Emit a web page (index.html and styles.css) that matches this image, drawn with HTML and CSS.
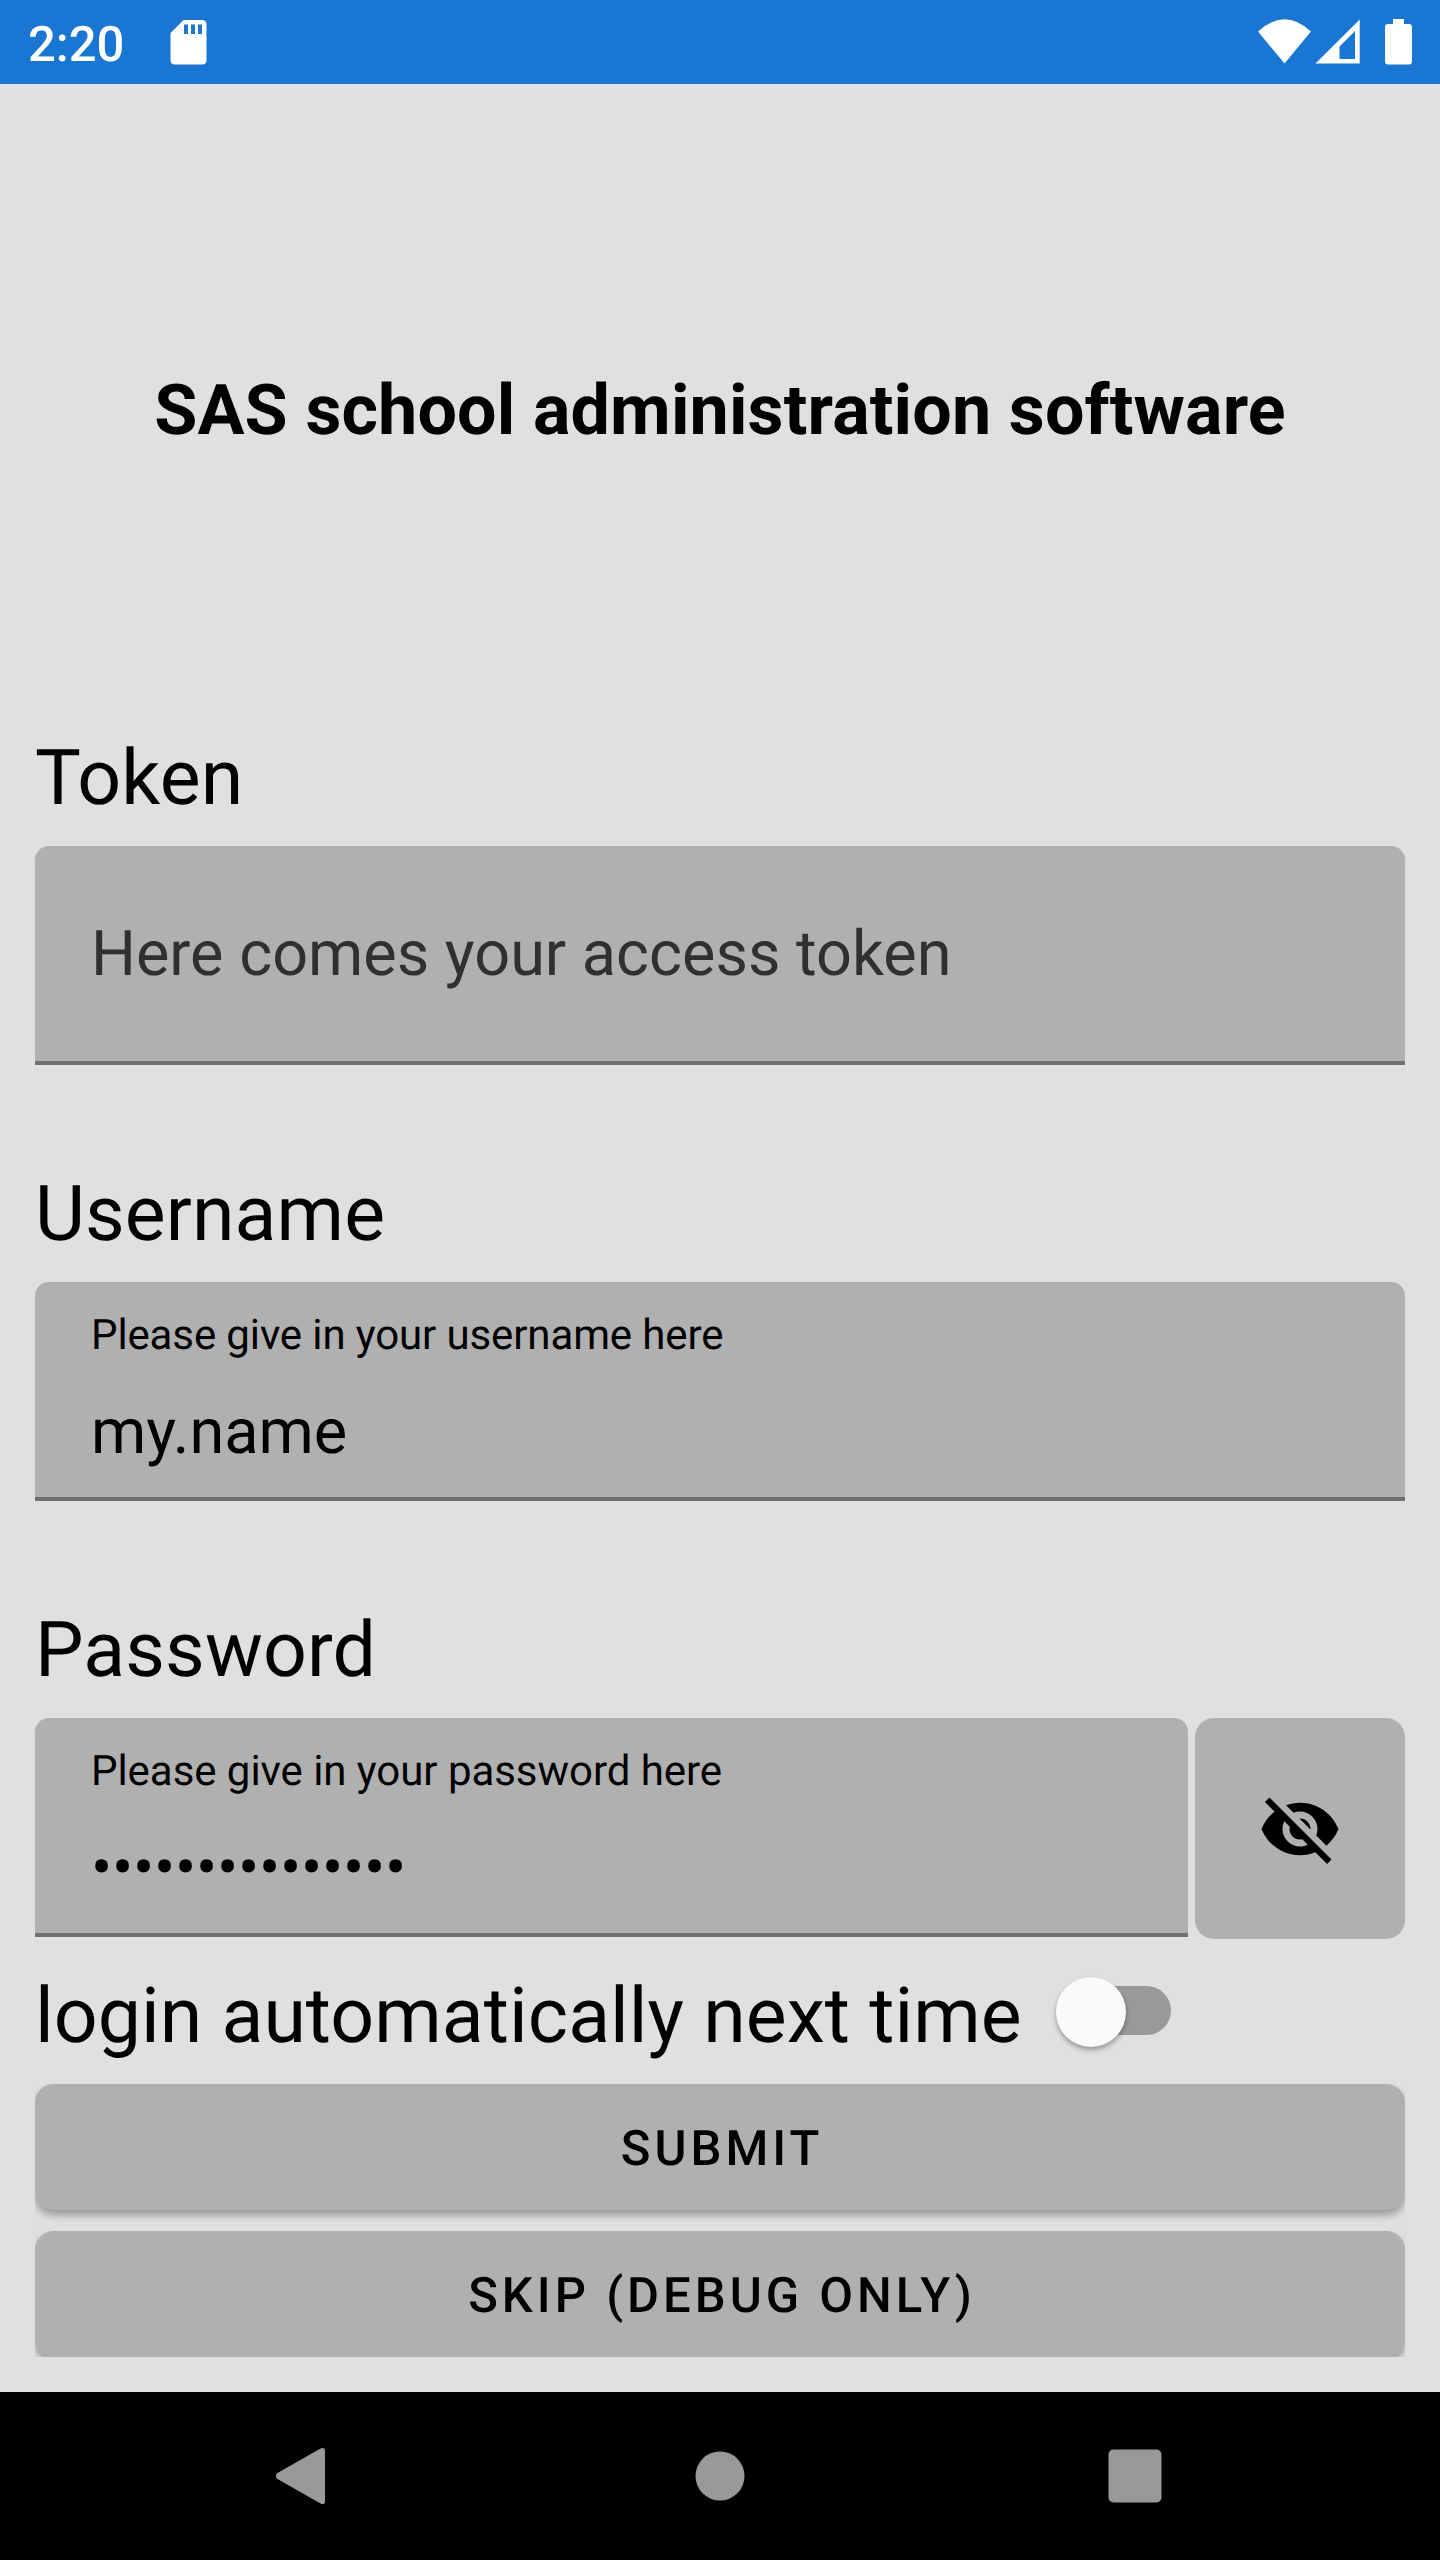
FILE: index.html
```html
<!DOCTYPE html>
<html lang="en">
<head>
<meta charset="utf-8">
<title>SAS school administration software</title>
<link rel="stylesheet" href="styles.css">
</head>
<body>
<header class="status">
  <span class="clock">2:20</span>
  <svg class="sd" width="38" height="48" viewBox="0 0 38 48"><path fill="#fff" fill-rule="evenodd" d="M13.500 0H32q4.500 0 4.500 4.500V40q0 4.500-4.500 4.500H5Q.5 44.500.5 40V13zM14 4.500V14h4V4.500zm7 0V14h4V4.500zm7 0V14h4V4.500z"/></svg>
  <svg class="signals" width="154" height="48" viewBox="1258 20 154 48"><path fill="#fff" d="M1258 31.500Q1284.500 7 1311 31.500L1284.500 63.500z"/><path fill="#fff" fill-rule="evenodd" d="M1359.700 19.500V63.500H1315.500zM1355 31 1339.500 46.500V59H1355z"/><path fill="#fff" d="M1393 19h11v5h5q3 0 3 3v34q0 3.500-3 3.500h-21q-3 0-3-3.500V27q0-3 3-3h5z"/></svg>
</header>
<main>
  <h1>SAS school administration software</h1>
  <section class="group">
    <label class="label">Token</label>
    <div class="field empty"><span class="value">Here comes your access token</span></div>
  </section>
  <section class="group">
    <label class="label">Username</label>
    <div class="field"><span class="hint">Please give in your username here</span><span class="value">my.name</span></div>
  </section>
  <section class="group last">
    <label class="label">Password</label>
    <div class="row">
      <div class="field"><span class="hint wide">Please give in your password here</span><span class="value dots">•••••••••••••••</span></div>
      <button class="eye"><svg width="84" height="84" viewBox="0 0 24 24"><path d="M12 7c2.76 0 5 2.24 5 5 0 .65-.13 1.26-.36 1.83l2.92 2.92c1.51-1.26 2.7-2.89 3.43-4.75-1.73-4.39-6-7.5-11-7.5-1.4 0-2.74.25-3.98.7l2.16 2.16C10.74 7.13 11.35 7 12 7zM2 4.27l2.28 2.28.46.46C3.08 8.3 1.78 10.02 1 12c1.73 4.39 6 7.5 11 7.5 1.55 0 3.03-.3 4.38-.84l.42.42L19.73 22 21 20.73 3.27 3 2 4.27zM7.53 9.8l1.55 1.55c-.05.21-.08.43-.08.65 0 1.66 1.34 3 3 3 .22 0 .44-.03.65-.08l1.55 1.55c-.67.33-1.41.53-2.2.53-2.76 0-5-2.24-5-5 0-.79.2-1.53.53-2.2zm4.31-.78l3.15 3.15.02-.16c0-1.66-1.34-3-3-3l-.17.01z"/></svg></button>
    </div>
  </section>
  <div class="auto"><span class="auto-label">login automatically next time</span><span class="switch"></span></div>
  <button class="btn">SUBMIT</button>
  <button class="btn flat">SKIP (DEBUG ONLY)</button>
</main>
<nav class="nav">
  <svg width="1440" height="168" viewBox="0 2392 1440 168"><path fill="#999" d="M277.500 2473 320.500 2448.500Q325 2446.500 325 2451V2501Q325 2505.500 320.500 2503.500L277.500 2479Q274 2476 277.500 2473z"/><circle cx="720" cy="2476" r="24.500" fill="#999"/><rect x="1108.500" y="2449.500" width="53" height="53" rx="5" fill="#999"/></svg>
</nav>
</body>
</html>
```
FILE: styles.css
```css
* { box-sizing: border-box; }
body { margin: 0; width: 1440px; height: 2560px; display: flex; flex-direction: column; background: #e0e0e0; color: #000; font-family: Roboto, sans-serif; text-rendering: geometricPrecision; }
button { border: 0; padding: 0; font: inherit; color: inherit; text-rendering: inherit; }
.status { height: 84px; flex: none; background: #1976d2; display: flex; align-items: flex-start; padding: 20px 28px 0; color: #fff; }
.clock { font-size: 49px; line-height: 49px; width: 142px; font-weight: 500; }
.signals { margin-left: auto; overflow: visible; }
main { flex: 1; padding: 0 35px; display: flex; flex-direction: column; }
h1 { margin: 0; height: 648px; flex: none; line-height: 654px; text-align: center; font-size: 70px; font-weight: 700; letter-spacing: 0.14px; white-space: nowrap; }
.group { height: 436px; flex: none; }
.group.last { height: 336px; }
.label { display: block; height: 114px; line-height: 93px; font-size: 77px; letter-spacing: 0.1px; }
.field { height: 219px; padding: 33px 56px 0; display: flex; flex-direction: column; background: #b0b0b0; border-bottom: 4px solid #707070; border-radius: 14px 14px 0 0; }
.hint { font-size: 42px; line-height: 42px; letter-spacing: -0.12px; }
.hint.wide { letter-spacing: -0.05px; }
.value { font-size: 63px; line-height: 74px; margin-top: 39px; }
.empty .value { color: #303030; }
.dots { letter-spacing: -0.25px; }
.row { display: flex; gap: 7px; }
.row .field { flex: 1; }
.eye { width: 210px; height: 221px; background: #b0b0b0; border-radius: 19px; display: flex; align-items: center; justify-content: center; }
.auto { height: 144px; flex: none; display: flex; align-items: flex-start; padding-top: 30px; }
.auto-label { font-size: 77px; line-height: 93px; letter-spacing: 0.04px; }
.switch { margin: 16px 0 0 51px; width: 98px; height: 49px; border-radius: 25px; background: #999; position: relative; }
.switch::before { content: ""; position: absolute; left: -17px; top: -9px; width: 70px; height: 70px; border-radius: 50%; background: #fafafa; box-shadow: 0 3px 5px #0005; }
.btn { height: 126px; flex: none; margin-bottom: 21px; padding: 2px 0 0 4px; border-radius: 19px; background: #b0b0b0; font-size: 49px; font-weight: 500; letter-spacing: 4px; box-shadow: 0 5px 8px #0005; clip-path: inset(0 0 -20px 0); }
.btn.flat { margin-bottom: 0; clip-path: inset(0); }
.nav { height: 168px; background: #000; flex: none; }
.nav svg { display: block; }
```
